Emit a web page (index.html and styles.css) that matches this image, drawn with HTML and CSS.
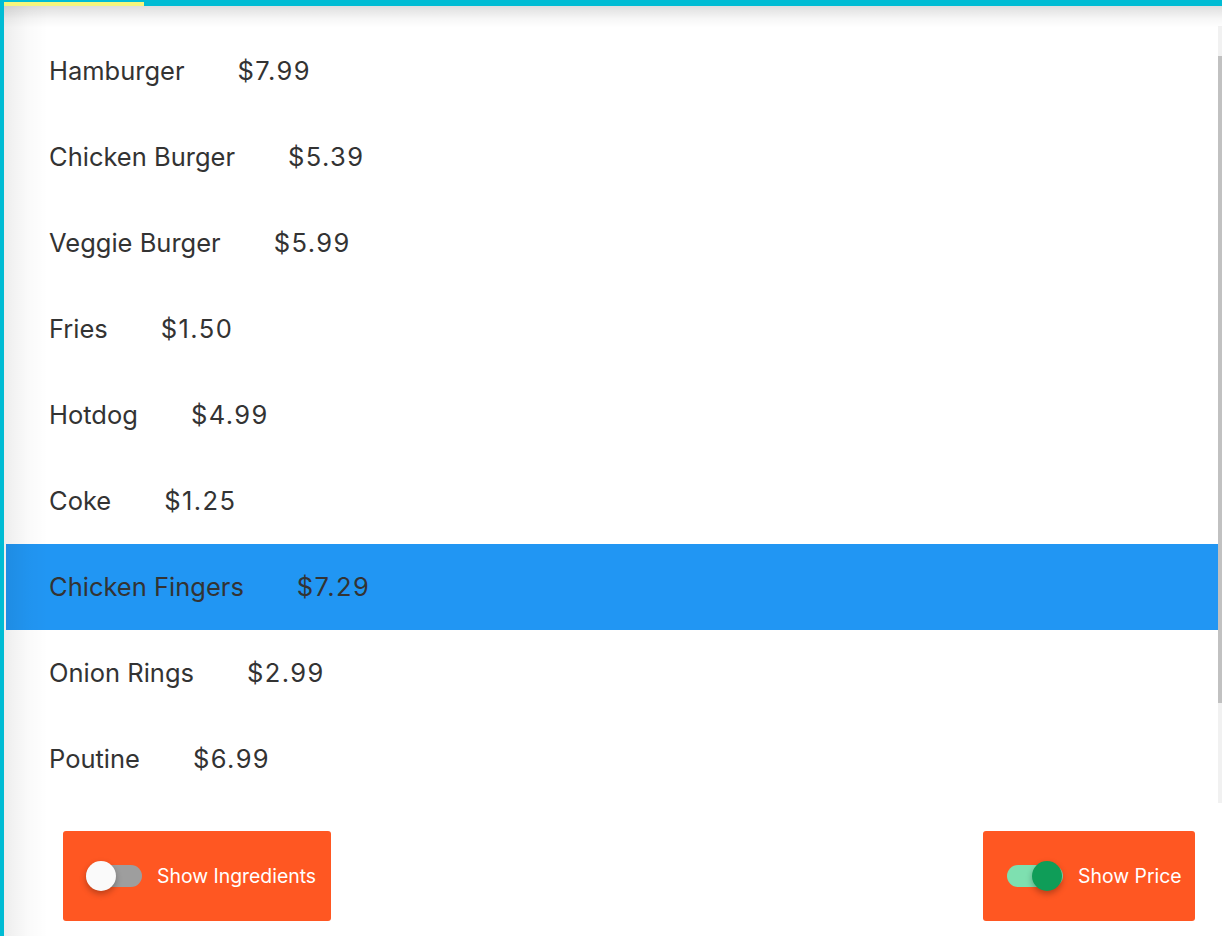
FILE: index.html
```html
<!DOCTYPE html>
<html lang="en">
<head>
<meta charset="utf-8">
<title>Menu</title>
<link rel="stylesheet" href="styles.css">
</head>
<body>
<div class="app">
  <div class="topbar"><div class="tab-indicator"></div></div>
  <div class="main">
    <div class="list">
      <div class="row"><span class="name">Hamburger</span><span class="price">$7.99</span></div>
      <div class="row"><span class="name">Chicken Burger</span><span class="price">$5.39</span></div>
      <div class="row"><span class="name">Veggie Burger</span><span class="price">$5.99</span></div>
      <div class="row"><span class="name">Fries</span><span class="price">$1.50</span></div>
      <div class="row"><span class="name">Hotdog</span><span class="price">$4.99</span></div>
      <div class="row"><span class="name">Coke</span><span class="price">$1.25</span></div>
      <div class="row selected"><span class="name">Chicken Fingers</span><span class="price">$7.29</span></div>
      <div class="row"><span class="name">Onion Rings</span><span class="price">$2.99</span></div>
      <div class="row"><span class="name">Poutine</span><span class="price">$6.99</span></div>
      <div class="scrollbar"><div class="thumb"></div></div>
    </div>
    <div class="bottom">
      <button class="toggle-btn ingredients">
        <span class="switch off"><span class="track"></span><span class="knob"></span></span>
        <span class="label">Show Ingredients</span>
      </button>
      <button class="toggle-btn price-btn">
        <span class="switch on"><span class="track"></span><span class="knob"></span></span>
        <span class="label">Show Price</span>
      </button>
    </div>
  </div>
</div>
</body>
</html>
```
FILE: styles.css
```css
* { box-sizing: border-box; }
html, body { margin: 0; padding: 0; }
body {
  width: 1222px;
  height: 936px;
  overflow: hidden;
  background: #fff;
  font-family: Inter, "Noto Sans", sans-serif;
  color: #333;
}
.app {
  height: 936px;
  display: flex;
  flex-direction: column;
  border-left: 4px solid #00bcd4;
}
.topbar {
  height: 6px;
  background: #00bcd4;
  margin-left: -4px;
  padding-left: 4px;
  display: flex;
  align-items: flex-end;
  position: relative;
  z-index: 2;
}
.tab-indicator {
  width: 140px;
  height: 4px;
  background: #f6f67c;
}
.main {
  flex: 1;
  display: flex;
  flex-direction: column;
  position: relative;
  padding-top: 20px;
}
.main::before {
  content: "";
  position: absolute;
  left: 0; right: 0; top: 0;
  height: 22px;
  background: linear-gradient(to bottom, rgba(0,0,0,0.13), rgba(0,0,0,0.03) 60%, rgba(0,0,0,0));
  pointer-events: none;
  z-index: 1;
}
.main::after {
  content: "";
  position: absolute;
  left: 0; top: 0; bottom: 0;
  width: 44px;
  background: linear-gradient(to right, rgba(0,0,0,0.07), rgba(0,0,0,0.02) 55%, rgba(0,0,0,0));
  pointer-events: none;
  z-index: 1;
}
.list {
  position: relative;
  height: 777px;
  padding: 2px 0 0 2px;
  overflow: hidden;
}
.row {
  height: 86px;
  display: flex;
  align-items: center;
  padding-left: 43px;
  padding-bottom: 2px;
  font-size: 25.5px;
}
.row.selected { background: #2196f3; }
.price { margin-left: 53px; letter-spacing: 1.4px; }
.scrollbar {
  position: absolute;
  right: 0; top: 0; bottom: 0;
  width: 4px;
  background: #f1f1f1;
}
.thumb {
  position: absolute;
  left: 0; right: 0;
  top: 30px;
  height: 647px;
  background: #c1c1c1;
}
.bottom {
  flex: 1;
  display: flex;
  justify-content: space-between;
  align-items: flex-start;
  padding: 28px 27px 0 59px;
}
.toggle-btn {
  height: 90px;
  border: none;
  border-radius: 3px;
  background: #ff5722;
  color: #fff;
  display: flex;
  align-items: center;
  padding: 0 15px 0 23px;
  font-family: Inter, "Noto Sans", sans-serif;
  font-size: 19.4px;
  cursor: pointer;
}
.ingredients { width: 268px; }
.price-btn { width: 212px; padding-left: 24px; }
.switch {
  position: relative;
  width: 56px;
  height: 30px;
  display: block;
  flex: none;
  margin-right: 15px;
}
.track {
  position: absolute;
  left: 0; right: 0;
  top: 4px;
  height: 22px;
  border-radius: 11px;
  background: #9e9e9e;
}
.knob {
  position: absolute;
  top: 0;
  width: 30px;
  height: 30px;
  border-radius: 50%;
  background: #fafafa;
  box-shadow: 0 3px 6px rgba(0,0,0,0.28);
}
.switch.off .knob { left: 0; }
.switch.on .track { background: #7ee0b0; }
.switch.on .knob { left: 25px; background: #0f9d58; }
.label { white-space: nowrap; }
```
